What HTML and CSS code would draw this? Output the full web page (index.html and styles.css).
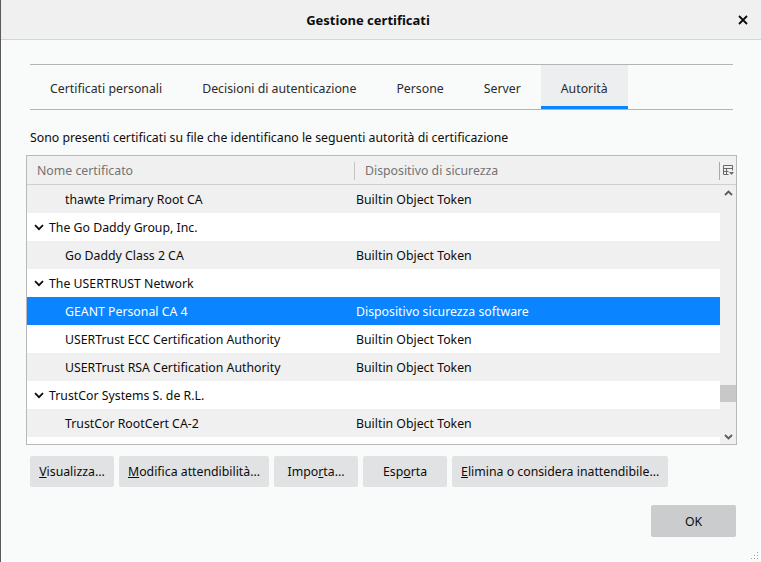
FILE: index.html
```html
<!DOCTYPE html>
<html lang="it">
<head>
<meta charset="utf-8">
<title>Gestione certificati</title>
<link rel="stylesheet" href="styles.css">
</head>
<body>
<div class="window">
  <header class="titlebar">
    <span class="title">Gestione certificati</span>
    <span class="close">
      <svg width="10" height="10" viewBox="0 0 10 10"><path d="M1 1L9 9M9 1L1 9" stroke="#0c0c0d" stroke-width="1.8" fill="none"/></svg>
    </span>
  </header>
  <main class="content">
    <nav class="tabs">
      <span class="tab">Certificati personali</span>
      <span class="tab">Decisioni di autenticazione</span>
      <span class="tab">Persone</span>
      <span class="tab">Server</span>
      <span class="tab selected">Autorità</span>
    </nav>
    <p class="desc">Sono presenti certificati su file che identificano le seguenti autorità di certificazione</p>
    <div class="tree">
      <div class="tree-head">
        <span class="col col-name">Nome certificato</span>
        <span class="col col-dev">Dispositivo di sicurezza</span>
        <span class="picker">
          <svg width="11" height="12" viewBox="0 0 11 12"><path d="M0.5 0.5H9.5V5.5M0.5 0.5V9.5H5.5M0.5 3.5H9.5M3.5 3.5V9.5M0.5 6.5H5.5" stroke="#6a6a6a" stroke-width="1" fill="none"/><path d="M6 7H11L8.5 10Z" fill="#6a6a6a"/></svg>
        </span>
      </div>
      <div class="tree-body">
        <div class="rows">
          <div class="row alt"><span class="cell name child">thawte Primary Root CA</span><span class="cell dev">Builtin Object Token</span></div>
          <div class="row"><span class="cell name group"><svg class="twisty" width="10" height="7" viewBox="0 0 10 7"><path d="M1 1.2L5 5.2L9 1.2" stroke="#0c0c0d" stroke-width="1.8" fill="none"/></svg>The Go Daddy Group, Inc.</span><span class="cell dev"></span></div>
          <div class="row alt"><span class="cell name child">Go Daddy Class 2 CA</span><span class="cell dev">Builtin Object Token</span></div>
          <div class="row"><span class="cell name group"><svg class="twisty" width="10" height="7" viewBox="0 0 10 7"><path d="M1 1.2L5 5.2L9 1.2" stroke="#0c0c0d" stroke-width="1.8" fill="none"/></svg>The USERTRUST Network</span><span class="cell dev"></span></div>
          <div class="row sel"><span class="cell name child">GEANT Personal CA 4</span><span class="cell dev">Dispositivo sicurezza software</span></div>
          <div class="row"><span class="cell name child">USERTrust ECC Certification Authority</span><span class="cell dev">Builtin Object Token</span></div>
          <div class="row alt"><span class="cell name child">USERTrust RSA Certification Authority</span><span class="cell dev">Builtin Object Token</span></div>
          <div class="row"><span class="cell name group"><svg class="twisty" width="10" height="7" viewBox="0 0 10 7"><path d="M1 1.2L5 5.2L9 1.2" stroke="#0c0c0d" stroke-width="1.8" fill="none"/></svg>TrustCor Systems S. de R.L.</span><span class="cell dev"></span></div>
          <div class="row alt"><span class="cell name child">TrustCor RootCert CA-2</span><span class="cell dev">Builtin Object Token</span></div>
          <div class="row"><span class="cell name child"></span><span class="cell dev"></span></div>
        </div>
        <div class="scrollbar">
          <svg class="arrow" width="9" height="6" viewBox="0 0 9 6"><path d="M1 5L4.5 1.5L8 5" stroke="#5b5b5b" stroke-width="1.8" fill="none"/></svg>
          <div class="track"><div class="thumb"></div></div>
          <svg class="arrow" width="9" height="6" viewBox="0 0 9 6"><path d="M1 1L4.5 4.5L8 1" stroke="#5b5b5b" stroke-width="1.8" fill="none"/></svg>
        </div>
      </div>
    </div>
    <div class="actions">
      <button class="btn"><u>V</u>isualizza...</button>
      <button class="btn"><u>M</u>odifica attendibilità...</button>
      <button class="btn">Impo<u>r</u>ta...</button>
      <button class="btn">Esp<u>o</u>rta</button>
      <button class="btn"><u>E</u>limina o considera inattendibile...</button>
    </div>
    <div class="footer">
      <button class="btn ok">OK</button>
    </div>
  </main>
  <span class="grip">
    <svg width="8" height="8" viewBox="0 0 8 8"><g fill="#a0a0a0"><rect x="6" y="0" width="1" height="1"/><rect x="3" y="3" width="1" height="1"/><rect x="6" y="3" width="1" height="1"/><rect x="0" y="6" width="1" height="1"/><rect x="3" y="6" width="1" height="1"/><rect x="6" y="6" width="1" height="1"/></g></svg>
  </span>
</div>
</body>
</html>
```
FILE: styles.css
```css
html, body {
  margin: 0;
  padding: 0;
}
body {
  background: #f9fafa;
  font-family: "Noto Sans", "Open Sans", sans-serif;
  font-size: 12.3px;
  color: #0c0c0d;
}
.window {
  position: relative;
  width: 761px;
  height: 562px;
  box-sizing: border-box;
  border-left: 1px solid #5a5a5a;
  overflow: hidden;
}
.titlebar {
  height: 39px;
  background: #f0f0f0;
  border-bottom: 1px solid #d4d4d4;
  display: flex;
  align-items: center;
  justify-content: center;
  position: relative;
}
.title {
  font-weight: bold;
  font-size: 13px;
  margin-left: -26px;
}
.close {
  position: absolute;
  right: 13px;
  top: 15px;
  width: 10px;
  height: 10px;
  display: flex;
}
.content {
  padding: 0 24px 0 25px;
}
.tabs {
  margin: 24px 4px 0 4px;
  border-top: 1px solid #b4b4b4;
  border-bottom: 1px solid #b4b4b4;
  display: flex;
  height: 44px;
}
.tab {
  padding: 2px 20px 0 20px;
  display: flex;
  align-items: center;
  color: #2a2a2e;
  box-sizing: border-box;
}
.tab.selected {
  background: #eceef0;
  border-bottom: 3px solid #0a84ff;
  padding-top: 5px;
}
.desc {
  margin: 18px 0 0 4px;
  line-height: 20px;
  height: 20px;
}
.tree {
  margin-top: 7px;
  border: 1px solid #b8b8b8;
  background: #ffffff;
  height: 288px;
  display: flex;
  flex-direction: column;
}
.tree-head {
  height: 29px;
  border-bottom: 1px solid #cfcfcf;
  background: #f0f0f0;
  display: flex;
  align-items: center;
  color: #737373;
  flex: none;
  padding-top: 1px;
  box-sizing: border-box;
}
.col-name {
  width: 317px;
  padding-left: 10px;
  border-right: 1px solid #c4c4c4;
  line-height: 18px;
}
.col-dev {
  flex: 1;
  padding-left: 10px;
}
.picker {
  width: 14px;
  height: 18px;
  border-left: 1px solid #a9a9a9;
  display: flex;
  align-items: center;
  justify-content: flex-end;
  padding-right: 2px;
}
.tree-body {
  flex: 1;
  display: flex;
  overflow: hidden;
}
.rows {
  flex: 1;
  overflow: hidden;
}
.row {
  height: 28px;
  display: flex;
  align-items: center;
  background: #ffffff;
}
.row.alt {
  background: #f0f0f0;
}
.row.sel {
  background: #0a84ff;
  color: #ffffff;
}
.cell.name {
  width: 329px;
  box-sizing: border-box;
  display: flex;
  align-items: center;
}
.cell.child {
  padding-left: 38px;
}
.cell.group {
  padding-left: 7px;
}
.twisty {
  margin-right: 5px;
}
.cell.dev {
  flex: 1;
}
.scrollbar {
  width: 16px;
  background: #f0f0f0;
  display: flex;
  flex-direction: column;
  align-items: center;
  padding: 5px 0 4px 0;
  box-sizing: border-box;
}
.arrow {
  flex: none;
}
.track {
  flex: 1;
  width: 100%;
  position: relative;
}
.thumb {
  position: absolute;
  left: 0;
  right: 0;
  top: 189px;
  height: 17px;
  background: #c8c8c8;
}
.actions {
  display: flex;
  gap: 5px;
  margin: 11px 0 0 4px;
}
.btn {
  font-family: inherit;
  font-size: 12.3px;
  color: #0c0c0d;
  background: #e1e2e3;
  border: none;
  border-radius: 2px;
  height: 31px;
  min-width: 84px;
  padding: 0 9px;
  margin: 0;
}
.footer {
  display: flex;
  justify-content: flex-end;
  margin: 18px 1px 0 0;
}
.btn.ok {
  width: 85px;
  height: 32px;
  background: #cbcccd;
}
.grip {
  position: absolute;
  right: 2px;
  bottom: 2px;
  display: flex;
}
```
